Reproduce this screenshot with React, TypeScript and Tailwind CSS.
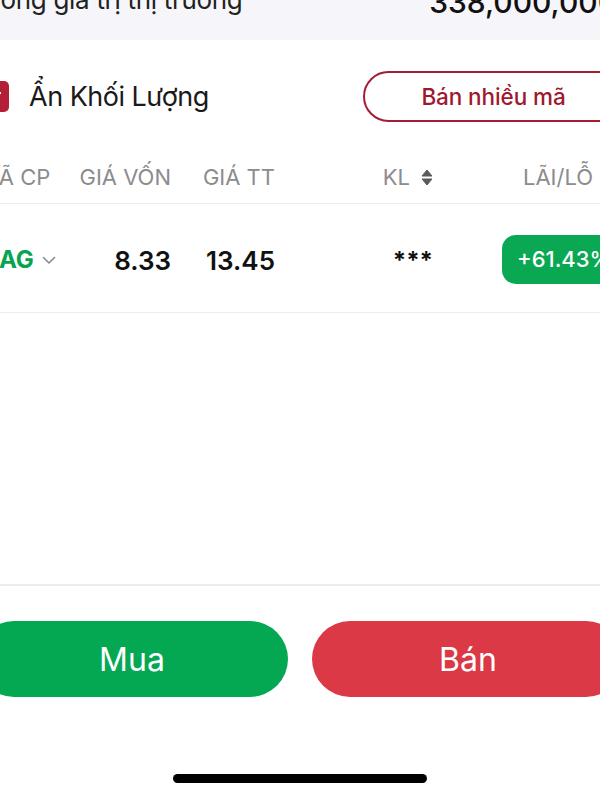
import React from "react";

const font = { fontFamily: "Inter, 'Noto Sans', sans-serif" };

function Chevron() {
  return (
    <svg width="14" height="9" viewBox="0 0 14 9" fill="none">
      <path d="M1.5 1.5 L7 7 L12.5 1.5" stroke="#8a8a8e" strokeWidth="1.6" strokeLinecap="round" strokeLinejoin="round" />
    </svg>
  );
}

function SortIcon() {
  return (
    <svg width="12" height="17" viewBox="0 0 12 17">
      <path d="M6 1 L11 7 L1 7 Z" fill="#5a5a5e" strokeLinejoin="round" stroke="#5a5a5e" strokeWidth="1" />
      <path d="M6 16 L11 10 L1 10 Z" fill="#5a5a5e" strokeLinejoin="round" stroke="#5a5a5e" strokeWidth="1" />
    </svg>
  );
}

export default function App() {
  return (
    <div className="w-[600px] h-[800px] overflow-hidden bg-white" style={font}>
      <div className="w-[648px] ml-[-24px] flex flex-col">
        {/* top band */}
        <div className="h-[40px] bg-[#f6f6fa] overflow-hidden">
          <div className="flex items-start justify-between mt-[-13px] pl-[10px] pr-[7px]">
            <span className="text-[26px] leading-[26px] text-[#222] tracking-[-0.3px]">Tổng giá trị thị trường</span>
            <span className="text-[30px] leading-[30px] font-medium text-[#111]">338,000,000</span>
          </div>
        </div>

        {/* checkbox row */}
        <div className="mt-[31px] h-[51px] flex items-center justify-between">
          <div className="flex items-center">
            <div className="ml-[3px] w-[30px] h-[31px] rounded-[5px] bg-[#b31f36] flex items-center justify-center">
              <svg width="16" height="12" viewBox="0 0 16 12" fill="none">
                <path d="M2 6 L6 10 L14 2" stroke="white" strokeWidth="2.2" strokeLinecap="round" strokeLinejoin="round" />
              </svg>
            </div>
            <span className="ml-[20px] mt-[2px] text-[27px] tracking-[-0.5px] text-[#1a1a1a]">Ẩn Khối Lượng</span>
          </div>
          <div className="w-[261px] h-[51px] rounded-full border-2 border-[#a61c32] flex items-center justify-center">
            <span className="text-[22.5px] font-medium text-[#a0182e] tracking-[-0.1px]">Bán nhiều mã</span>
          </div>
        </div>

        {/* header row */}
        <div className="mt-[30px] h-[52px] flex items-center pl-[3px] border-b border-[#ececec] text-[22px] text-[#8c8c8e]">
          <div className="w-[91px]">MÃ CP</div>
          <div className="w-[101px] text-right">GIÁ VỐN</div>
          <div className="w-[104px] text-right">GIÁ TT</div>
          <div className="w-[158px] flex items-center justify-end gap-[11px]">
            <span>KL</span>
            <SortIcon />
          </div>
          <div className="ml-[69px] pl-[21px] whitespace-nowrap">LÃI/LỖ</div>
        </div>

        {/* data row */}
        <div className="h-[109px] flex items-center pl-[3px] border-b border-[#ececec]">
          <div className="w-[91px] flex items-center pt-[3px]">
            <span className="text-[24px] font-bold text-[#06a451] ml-[2px]">HAG</span>
            <span className="ml-[8px] mt-[2px]"><Chevron /></span>
          </div>
          <div className="w-[101px] text-right text-[26px] font-semibold text-[#111] pt-[5px]">8.33</div>
          <div className="w-[104px] text-right text-[26px] font-semibold text-[#111] pt-[5px]">13.45</div>
          <div className="w-[158px] text-right text-[24px] font-bold text-[#111] pt-[6px]">***</div>
          <div className="ml-[69px] w-[112px] h-[49px] mt-[2px] rounded-[14px] bg-[#0aa853] flex items-center pl-[15px]">
            <span className="text-[22px] font-medium text-white whitespace-nowrap">+61.43%</span>
          </div>
        </div>

        {/* divider */}
        <div className="mt-[271px] h-[2px] bg-[#ececec]" />

        {/* buttons */}
        <div className="mt-[35px] flex gap-[24px]">
          <div className="flex-1 h-[76px] rounded-full bg-[#04a853] flex items-center justify-center">
            <span className="text-[32px] text-white mt-[2px]">Mua</span>
          </div>
          <div className="flex-1 h-[76px] rounded-full bg-[#da3945] flex items-center justify-center">
            <span className="text-[32px] text-white mt-[2px]">Bán</span>
          </div>
        </div>

        {/* home indicator */}
        <div className="mt-[77px] mx-auto w-[254px] h-[9px] rounded-full bg-black" />
      </div>
    </div>
  );
}
